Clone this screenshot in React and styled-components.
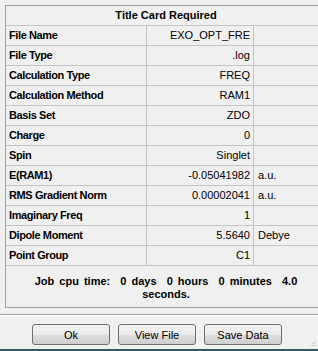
import React from "react";
import styled, { createGlobalStyle } from "styled-components";

const GlobalStyle = createGlobalStyle`
  html, body {
    margin: 0;
    padding: 0;
    background: #f0f0f0;
  }
  body {
    font-family: "Liberation Sans", Arial, sans-serif;
    font-size: 11px;
    color: #000;
  }
`;

const Window = styled.div`
  width: 318px;
  height: 351px;
  overflow: hidden;
  background: #f0f0f0;
  display: flex;
  flex-direction: column;
`;

const Panel = styled.div`
  margin: 5px 0 0 5px;
  width: 320px;
  flex-shrink: 0;
  border-top: 1px solid #a0a0a0;
  border-left: 1px solid #a0a0a0;
  border-bottom: 1px solid #a0a0a0;
`;

const Header = styled.div`
  height: 19px;
  line-height: 19px;
  text-align: center;
  font-weight: bold;
  border-bottom: 1px solid #c4c4c4;
`;

const Row = styled.div`
  display: grid;
  grid-template-columns: 141px 107px 1fr;
  height: 19px;
  border-bottom: 1px solid #c4c4c4;
`;

const Cell = styled.div`
  line-height: 19px;
  padding: 0 ${(p) => (p.$align === "right" ? "3px" : "4px")} 0 ${(p) =>
      p.$bold ? "3px" : "4px"};
  font-weight: ${(p) => (p.$bold ? "bold" : "normal")};
  letter-spacing: ${(p) => (p.$bold ? "-0.4px" : "0")};
  text-align: ${(p) => p.$align || "left"};
  border-right: ${(p) => (p.$divider ? "1px solid #c4c4c4" : "none")};
  white-space: nowrap;
  overflow: hidden;
`;

const CpuBox = styled.div`
  height: 41px;
  box-sizing: border-box;
  padding: 9px 0 0 0;
  text-align: center;
  font-weight: bold;
  line-height: 13px;
  word-spacing: 2px;
  white-space: pre;
`;

const Separator = styled.div`
  margin-top: 6px;
  height: 0;
  border-top: 1px solid #a0a0a0;
  border-bottom: 1px solid #ffffff;
`;

const ButtonRow = styled.div`
  display: flex;
  gap: 8px;
  padding: 8px 0 0 32px;
`;

const Button = styled.button`
  width: 78px;
  height: 21px;
  box-sizing: border-box;
  border: 1px solid #707070;
  border-radius: 3px;
  background: linear-gradient(#f2f2f2 0%, #ebebeb 50%, #dddddd 51%, #cfcfcf 100%);
  font-family: "Liberation Sans", Arial, sans-serif;
  font-size: 11px;
  color: #000;
  padding: 0;
`;

const Footer = styled.div`
  margin-top: auto;
  position: relative;
  height: 2px;
  background: #2c5c6a;
`;

const Grip = styled.svg`
  position: absolute;
  right: 2px;
  bottom: 4px;
`;

const rows = [
  ["File Name", "EXO_OPT_FRE", ""],
  ["File Type", ".log", ""],
  ["Calculation Type", "FREQ", ""],
  ["Calculation Method", "RAM1", ""],
  ["Basis Set", "ZDO", ""],
  ["Charge", "0", ""],
  ["Spin", "Singlet", ""],
  ["E(RAM1)", "-0.05041982", "a.u."],
  ["RMS Gradient Norm", "0.00002041", "a.u."],
  ["Imaginary Freq", "1", ""],
  ["Dipole Moment", "5.5640", "Debye"],
  ["Point Group", "C1", ""],
];

export default function App() {
  return (
    <Window>
      <GlobalStyle />
      <Panel>
        <Header>Title Card Required</Header>
        {rows.map(([label, value, unit]) => (
          <Row key={label}>
            <Cell $bold $divider>
              {label}
            </Cell>
            <Cell $align="right" $divider>
              {value}
            </Cell>
            <Cell>{unit}</Cell>
          </Row>
        ))}
        <CpuBox>
          {"Job cpu time:  0 days  0 hours  0 minutes  4.0\nseconds."}
        </CpuBox>
      </Panel>
      <Separator />
      <ButtonRow>
        <Button>Ok</Button>
        <Button>View File</Button>
        <Button>Save Data</Button>
      </ButtonRow>
      <Footer>
        <Grip width="6" height="6" viewBox="0 0 6 6">
          <rect x="4" y="0" width="1" height="1" fill="#b8b8b8" />
          <rect x="2" y="2" width="1" height="1" fill="#b8b8b8" />
          <rect x="4" y="2" width="1" height="1" fill="#b8b8b8" />
          <rect x="0" y="4" width="1" height="1" fill="#b8b8b8" />
          <rect x="2" y="4" width="1" height="1" fill="#b8b8b8" />
          <rect x="4" y="4" width="1" height="1" fill="#b8b8b8" />
        </Grip>
      </Footer>
    </Window>
  );
}
